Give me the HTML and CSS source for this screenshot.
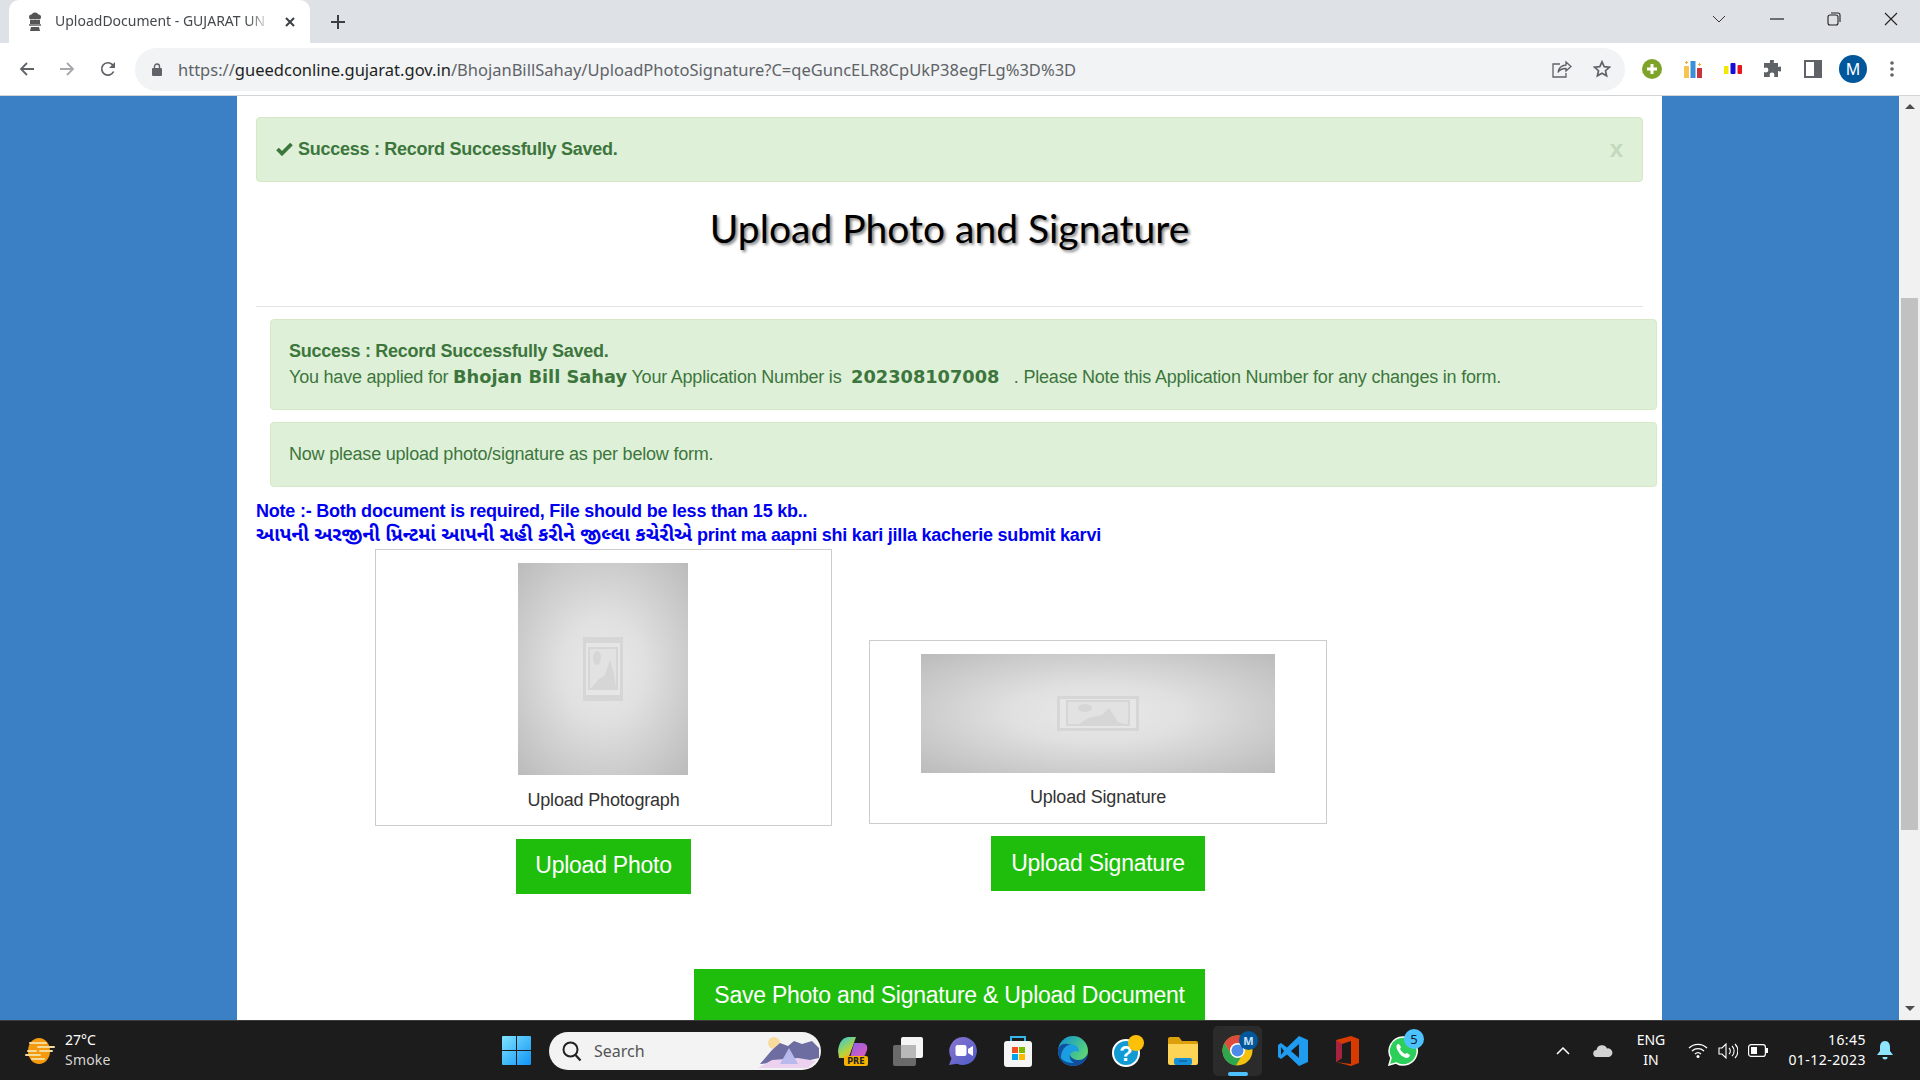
FILE: index.html
```html
<!DOCTYPE html>
<html lang="en">
<head>
<meta charset="utf-8">
<title>UploadDocument - GUJARAT UNIVERSITY</title>
<link rel="stylesheet" href="styles.css">
</head>
<body>
<div class="screen">
  <header class="chrome">
    <div class="tabbar">
      <div class="tab">
        <svg class="favicon" width="16" height="20" viewBox="0 0 16 20"><g fill="#555"><circle cx="8" cy="4" r="3.5"/><circle cx="4.5" cy="5" r="2.5"/><circle cx="11.5" cy="5" r="2.5"/><rect x="3" y="8" width="10" height="4"/><rect x="2" y="12" width="12" height="2" fill="#888"/><path d="M4 15h8l1 4H3z"/></g></svg>
        <span class="tab-title">UploadDocument - GUJARAT UN</span>
        <svg class="tab-close" width="12" height="12" viewBox="0 0 12 12"><path d="M2 2l8 8M10 2l-8 8" stroke="#3c4043" stroke-width="2"/></svg>
      </div>
      <svg class="new-tab" width="16" height="16" viewBox="0 0 16 16"><path d="M8 1v14M1 8h14" stroke="#3c4043" stroke-width="2"/></svg>
      <div class="win-controls">
        <svg class="wc-chev" width="14" height="8" viewBox="0 0 14 8"><path d="M1 1l6 6 6-6" fill="none" stroke="#333" stroke-width="1"/></svg>
        <svg class="wc-min" width="14" height="2" viewBox="0 0 14 2"><path d="M0 1h14" stroke="#222" stroke-width="1.2"/></svg>
        <svg class="wc-max" width="14" height="14" viewBox="0 0 14 14"><rect x="1" y="3" width="10" height="10" rx="2" fill="none" stroke="#222" stroke-width="1.1"/><path d="M4 1h7a2 2 0 0 1 2 2v7" fill="none" stroke="#222" stroke-width="1.1"/></svg>
        <svg class="wc-close" width="14" height="14" viewBox="0 0 14 14"><path d="M1 1l12 12M13 1L1 13" stroke="#222" stroke-width="1.1"/></svg>
      </div>
    </div>
    <div class="toolbar">
      <svg class="tb-back" width="16" height="16" viewBox="0 0 16 16"><path d="M15 8H2M8 2L2 8l6 6" fill="none" stroke="#5f6368" stroke-width="1.8"/></svg>
      <svg class="tb-fwd" width="16" height="16" viewBox="0 0 16 16"><path d="M1 8h13M8 2l6 6-6 6" fill="none" stroke="#a6a8ab" stroke-width="1.8"/></svg>
      <svg class="tb-reload" width="16" height="16" viewBox="0 0 16 16"><path d="M13.6 10.500A6.200 6.200 0 1 1 12.400 3.600L14.500 5.500" fill="none" stroke="#5f6368" stroke-width="1.7"/><path d="M15 1v6H9z" fill="#5f6368"/></svg>
      <div class="omnibox">
        <svg class="lock" width="10" height="13" viewBox="0 0 10 13"><path d="M2.500 5V3.500a2.500 2.500 0 0 1 5 0V5" fill="none" stroke="#5f6368" stroke-width="1.4"/><rect y="5" width="10" height="8" rx="1" fill="#5f6368"/></svg>
        <span class="url"><span class="url-dim">https://</span>gueedconline.gujarat.gov.in<span class="url-dim">/BhojanBillSahay/UploadPhotoSignature?C=qeGuncELR8CpUkP38egFLg%3D%3D</span></span>
        <svg class="om-share" width="20" height="18" viewBox="0 0 20 18"><path d="M14 2l5 4.500-5 4.500V8.500c-4 0-6.500 1-8 4 .5-4.500 3-7 8-7.500z" fill="none" stroke="#5f6368" stroke-width="1.3"/><path d="M8 4H1v13h13v-4" fill="none" stroke="#5f6368" stroke-width="1.3"/></svg>
        <svg class="om-star" width="18" height="18" viewBox="0 0 18 18"><path d="M9 1.800l2.200 4.800 5.200.6-3.900 3.500 1.100 5.100L9 13.200l-4.600 2.600 1.100-5.100L1.600 7.200l5.200-.6z" fill="none" stroke="#5f6368" stroke-width="1.7"/></svg>
      </div>
      <svg class="ext-plus" width="20" height="20" viewBox="0 0 20 20"><circle cx="10" cy="10" r="10" fill="#7da428"/><path d="M10 5v10M5 10h10" stroke="#fff" stroke-width="3"/></svg>
      <svg class="ext ext-first" width="20" height="18" viewBox="0 0 20 18"><rect x="1" y="6" width="5" height="12" fill="#f5c451"/><rect x="7.500" y="1" width="5" height="17" fill="#3a8fd6"/><rect x="14" y="8" width="5" height="10" fill="#c8343a"/><path d="M3.500 1v3M2 2.500h3M16.500 3v3M15 4.500h3" stroke="#e8b030" stroke-width="1"/></svg>
      <svg class="ext" width="20" height="14" viewBox="0 0 20 14"><rect x="1" y="4" width="4.500" height="8" fill="#f5e800"/><rect x="7.500" y="1" width="5" height="11" rx="1" fill="#1510d8"/><rect x="14.500" y="3" width="4.500" height="9" rx="1" fill="#e8161c"/></svg>
      <svg class="ext" width="18" height="18" viewBox="0 0 18 18"><path d="M7 1a2 2 0 0 1 4 0c0 .7-.3 1.200-.4 2H15v4c.8 0 1.300-.4 2-.4a2.400 2.400 0 0 1 0 4.800c-.7 0-1.200-.4-2-.4v6h-4c0-.8.4-1.300.4-2a2.400 2.400 0 0 0-4.800 0c0 .7.400 1.200.400 2H1v-5c.8 0 1.300.4 2 .4a2.400 2.400 0 0 0 0-4.800c-.7 0-1.200.4-2 .4V3h6c0-.8-.4-1.300 0-2z" fill="#5f6368"/></svg>
      <svg class="ext ext-side" width="18" height="18" viewBox="0 0 18 18"><rect x="1" y="1" width="16" height="16" fill="none" stroke="#5f6368" stroke-width="2"/><rect x="10" y="1" width="7" height="16" fill="#5f6368"/></svg>
      <div class="avatar">M</div>
      <svg class="dots" width="4" height="16" viewBox="0 0 4 16"><circle cx="2" cy="2" r="1.800" fill="#5f6368"/><circle cx="2" cy="8" r="1.800" fill="#5f6368"/><circle cx="2" cy="14" r="1.800" fill="#5f6368"/></svg>
    </div>
  </header>

  <div class="viewport">
    <main class="sheet-wrap">
      <div class="sheet">
        <div class="alert alert-top">
          <svg class="check" width="17" height="14" viewBox="0 0 17 14"><path d="M1.500 7l4.500 4.500L15.500 2" fill="none" stroke="#3c763d" stroke-width="3.800"/></svg>
          <strong>Success : Record Successfully Saved.</strong>
          <span class="alert-x">x</span>
        </div>
        <h1 class="title">Upload Photo and Signature</h1>
        <hr class="rule">
        <div class="alert alert-wide">
          <strong>Success : Record Successfully Saved.</strong><br>
          You have applied for <b class="verd">Bhojan Bill Sahay</b> Your Application Number is &nbsp;<b class="verd">202308107008</b> &nbsp; . Please Note this Application Number for any changes in form.
        </div>
        <div class="alert alert-wide alert-now">Now please upload photo/signature as per below form.</div>
        <p class="note">Note :- Both document is required, File should be less than 15 kb..<br><span class="note-gu">આપની અરજીની પ્રિન્ટમાં આપની સહી કરીને જીલ્લા કચેરીએ</span> print ma aapni shi kari jilla kacherie submit karvi</p>
        <div class="uploads">
          <section class="upload upload-photo">
            <div class="card">
              <div class="ph ph-photo">
                <svg width="40" height="64" viewBox="0 0 40 64"><rect width="40" height="64" fill="#d6d6d6"/><rect x="3" y="6" width="34" height="52" fill="#e6e6e6"/><rect x="6" y="11" width="28" height="41" fill="#e2e2e2" stroke="#d6d6d6" stroke-width="2"/><path d="M8 51l8-9 6-4 5-15 4 14 2 14z" fill="#d6d6d6"/><ellipse cx="14" cy="21" rx="4" ry="7" fill="#d6d6d6"/></svg>
              </div>
              <div class="caption">Upload Photograph</div>
            </div>
            <a class="btn">Upload Photo</a>
          </section>
          <section class="upload upload-sign">
            <div class="card">
              <div class="ph ph-sign">
                <svg width="82" height="35" viewBox="0 0 82 35"><rect width="82" height="35" fill="#d6d6d6"/><rect x="3" y="3" width="76" height="29" fill="#e6e6e6"/><rect x="10" y="5" width="62" height="24" fill="#e2e2e2" stroke="#d6d6d6" stroke-width="2"/><path d="M21 29l10-7 14-3 7-7 9 14 10 3z" fill="#d6d6d6"/><ellipse cx="28" cy="12" rx="7" ry="4" fill="#d6d6d6"/></svg>
              </div>
              <div class="caption">Upload Signature</div>
            </div>
            <a class="btn">Upload Signature</a>
          </section>
        </div>
        <div class="save-row"><a class="btn btn-save">Save Photo and Signature &amp; Upload Document</a></div>
      </div>
    </main>
    <aside class="scrollbar">
      <span class="sb-up"></span>
      <div class="sb-track"><div class="sb-thumb"></div></div>
      <span class="sb-down"></span>
    </aside>
  </div>

  <footer class="taskbar">
    <div class="weather">
      <svg width="32" height="26" viewBox="0 0 32 26"><ellipse cx="15" cy="13" rx="11" ry="13" fill="#f59a0e"/><path d="M6 5h16M14 9h16M4 13h8M16 13h12M2 17h14M8 21h12" stroke="#f3dc9a" stroke-width="2" stroke-linecap="round"/></svg>
      <div class="weather-text"><div>27°C</div><div class="weather-sub">Smoke</div></div>
    </div>
    <svg class="start" width="29" height="29" viewBox="0 0 29 29"><defs><linearGradient id="w" x1="0" y1="0" x2="1" y2="1"><stop offset="0" stop-color="#7fe4ff"/><stop offset="1" stop-color="#0f93f5"/></linearGradient></defs><path d="M0 1a1 1 0 0 1 1-1h13v14H0zM15 0h13a1 1 0 0 1 1 1v13H15zM0 15h14v14H1a1 1 0 0 1-1-1zM15 15h14v13a1 1 0 0 1-1 1H15z" fill="url(#w)"/></svg>
    <div class="search">
      <svg width="22" height="22" viewBox="0 0 22 22"><circle cx="9.500" cy="9.500" r="7" fill="none" stroke="#222" stroke-width="2"/><path d="M14.500 15l5 5.500" stroke="#222" stroke-width="2.200"/></svg>
      <span class="search-text">Search</span>
      <svg class="search-art" width="64" height="34" viewBox="0 0 64 34"><circle cx="18" cy="9" r="6" fill="#f8dc9e"/><path d="M4 30L16 16l8-7 8 3 6-5 8 3 10-3 7 7v10L54 26z" fill="#6e6da2"/><path d="M2 34l14-8 26-2 18 3-8 7z" fill="#ecd2ee"/><path d="M24 30l9-16 9 16z" fill="#b8b9ec"/></svg>
    </div>
    <div class="apps">
      <div class="app"><svg width="32" height="32" viewBox="0 0 32 32"><defs><linearGradient id="cp" x1="0" y1="0" x2=".6" y2="1"><stop offset="0" stop-color="#2bc6e6"/><stop offset=".7" stop-color="#b6d63a"/><stop offset="1" stop-color="#f0b030"/></linearGradient><linearGradient id="cq" x1="0" y1="0" x2="1" y2="1"><stop offset="0" stop-color="#8a60e8"/><stop offset="1" stop-color="#e85ab8"/></linearGradient></defs><path d="M1 16C2 7 6 2 12 2h7l-6 17c-1 3-3 4-6 4H2z" fill="url(#cp)"/><path d="M17 8h8c4 0 6 3 5 7l-2 5c-1 2-3 3-5 3h-10z" fill="url(#cq)"/><rect x="7" y="21" width="24" height="10" rx="2" fill="#f5b301"/><text x="19" y="29" class="pre">PRE</text></svg></div>
      <div class="app"><svg width="30" height="30" viewBox="0 0 30 30"><rect y="9" width="23" height="21" rx="2" fill="#6a6a6a"/><rect x="8" y="1" width="22" height="21" rx="2" fill="#f5f5f5"/><rect x="8" y="9" width="15" height="13" fill="#b8b8b8"/></svg></div>
      <div class="app"><svg width="30" height="30" viewBox="0 0 30 30"><defs><linearGradient id="mt" x1="0" y1="0" x2="1" y2="1"><stop offset="0" stop-color="#8a75cf"/><stop offset="1" stop-color="#4f5cc9"/></linearGradient></defs><path d="M15 1a14 14 0 1 1-6 26.700L1 29l2.500-6.500A14 14 0 0 1 15 1z" fill="url(#mt)"/><rect x="7.500" y="9" width="11" height="11" rx="2" fill="#fff"/><path d="M20 13l5-3v10l-5-3z" fill="#fff"/></svg></div>
      <div class="app"><svg width="30" height="32" viewBox="0 0 30 32"><path d="M8 7V2h14v5" fill="none" stroke="#35b5e8" stroke-width="2"/><rect x="1" y="6" width="28" height="26" rx="3" fill="#f5f5f5"/><rect x="9" y="12" width="6" height="6" fill="#f25022"/><rect x="16" y="12" width="6" height="6" fill="#7fba00"/><rect x="9" y="19" width="6" height="6" fill="#00a4ef"/><rect x="16" y="19" width="6" height="6" fill="#ffb900"/></svg></div>
      <div class="app"><svg width="30" height="30" viewBox="0 0 30 30"><defs><linearGradient id="ed" x1="0" y1="0" x2="1" y2=".7"><stop offset="0" stop-color="#0c8fd8"/><stop offset="1" stop-color="#63dc6c"/></linearGradient></defs><circle cx="15" cy="15" r="15" fill="url(#ed)"/><path d="M30 17c-1 9-8 13-14 13C7 30 0 24 0 15c0-4 4-8 9-7 5 0 8 3 8 7-2-1-5 0-5 3 0 4 5 6 9 6 4 0 7-3 9-7z" fill="#114f9e"/><path d="M3 22c0-9 6-15 13-13 4 1 5 4 5 7-3-2-8-1-9 3-1 3 1 6 4 8-6 0-11-2-13-5z" fill="#1b9de2"/></svg></div>
      <div class="app app-help"><svg width="32" height="32" viewBox="0 0 32 32"><circle cx="14" cy="18" r="13" fill="#119ad4" stroke="#fff" stroke-width="2"/><text x="14" y="26" class="q">?</text><circle cx="24" cy="8" r="8" fill="#fdc009"/></svg></div>
      <div class="app"><svg width="30" height="28" viewBox="0 0 30 28"><path d="M0 2a2 2 0 0 1 2-2h9l3 4h14a2 2 0 0 1 2 2v3H0z" fill="#dd9f0a"/><path d="M0 7h30v19a2 2 0 0 1-2 2H2a2 2 0 0 1-2-2z" fill="#fdd456"/><rect x="6" y="21" width="18" height="7" fill="#1690d8" rx="2"/><path d="M11 24h8" stroke="#0c4e8a" stroke-width="1"/></svg></div>
      <div class="app app-active">
        <svg width="31" height="31" viewBox="0 0 31 31"><circle cx="15.500" cy="15.500" r="15" fill="#f4c20d"/><path d="M15.500.5A15 15 0 0 0 2.500 8l6.500 11a7 7 0 0 1 6.500-10.500H29A15 15 0 0 0 15.500.5z" fill="#de4b3c"/><path d="M2.500 8A15 15 0 0 0 14 30.500l6.500-11a7 7 0 0 1-11.500-.5z" fill="#2fa650"/><circle cx="15.500" cy="15.500" r="7.500" fill="#fff"/><circle cx="15.500" cy="15.500" r="6" fill="#4c8ce8"/></svg>
        <span class="app-badge app-badge-m">M</span>
        <span class="app-dash"></span>
      </div>
      <div class="app"><svg width="30" height="30" viewBox="0 0 30 30"><path d="M21 0l9 4v22l-9 4-12-11.500L3 23l-3-2V9l3-2 6 4.500z" fill="#1f9cf0"/><path d="M21 8l-8 7 8 7z" fill="#1c1c1c"/><path d="M3 11l3 4-3 4z" fill="#1c1c1c"/></svg></div>
      <div class="app"><svg width="24" height="30" viewBox="0 0 24 30"><path d="M0 4l15-4 8 3v24l-8 3-15-4 15 2V5L6 8v14l-6 4z" fill="#d83b01"/><path d="M0 4l6 4v14l-6 4z" fill="#a5233e"/></svg></div>
      <div class="app"><svg width="30" height="30" viewBox="0 0 30 30"><path d="M15 1a14 14 0 1 1-7 26L1 29l2-7A14 14 0 0 1 15 1z" fill="#2ccf5a" stroke="#fff" stroke-width="1.500"/><path d="M10 8c-2 1-2 4 0 7 2 4 5 6 8 7 2 0 4-1 4-3l-3-2-2 1c-2-1-4-3-5-5l1-2-2-3z" fill="#fff"/></svg><span class="app-badge app-badge-n">5</span></div>
    </div>
    <div class="tray">
      <svg class="t-chev" width="14" height="8" viewBox="0 0 14 8"><path d="M1 7l6-6 6 6" fill="none" stroke="#fff" stroke-width="1.500"/></svg>
      <svg class="t-cloud" width="20" height="13" viewBox="0 0 20 13"><path d="M4 13a3.500 3.500 0 0 1-.5-7A5.500 5.500 0 0 1 14 4.500 4.300 4.300 0 0 1 16 13z" fill="#d2d2d2"/></svg>
      <div class="t-lang"><div>ENG</div><div>IN</div></div>
      <svg class="t-wifi" width="20" height="15" viewBox="0 0 20 15"><path d="M1 5a13 13 0 0 1 18 0M4 8a9 9 0 0 1 12 0M7 11a4.500 4.500 0 0 1 6 0" fill="none" stroke="#fff" stroke-width="1.300"/><circle cx="10" cy="13.500" r="1.500" fill="#fff"/></svg>
      <svg class="t-vol" width="20" height="16" viewBox="0 0 20 16"><path d="M1 5h3l4-4v14l-4-4H1z" fill="none" stroke="#fff" stroke-width="1.100"/><path d="M11 5a4 4 0 0 1 0 6M14 3a7 7 0 0 1 0 10M17 1a10 10 0 0 1 0 14" fill="none" stroke="#fff" stroke-width="1.100"/></svg>
      <svg class="t-batt" width="20" height="13" viewBox="0 0 20 13"><rect x=".6" y=".6" width="16.800" height="11.800" rx="2.500" fill="none" stroke="#fff" stroke-width="1.200"/><rect x="3" y="3" width="6" height="7" fill="#fff"/><rect x="18" y="4" width="2" height="5" fill="#fff"/></svg>
      <div class="t-clock"><div>16:45</div><div>01-12-2023</div></div>
      <svg class="t-bell" width="16" height="19" viewBox="0 0 16 19"><path d="M8 0c3.500 0 5 3 5 6v4l3 4H0l3-4V6c0-3 1.500-6 5-6z" fill="#8fe4ff"/><path d="M5.500 16h5a2.500 2.500 0 0 1-5 0z" fill="#8fe4ff"/></svg>
    </div>
  </footer>
</div>
</body>
</html>
```

FILE: styles.css
```css
* { box-sizing: border-box; }
html, body { margin: 0; height: 100%; overflow: hidden; }
body { font-family: "Liberation Sans", Arial, sans-serif; }
.screen { width: 1920px; height: 1080px; display: flex; flex-direction: column; overflow: hidden; background: #fff; }

/* browser chrome */
.chrome { flex: 0 0 96px; display: flex; flex-direction: column; border-bottom: 1px solid #d3d4d6; font-family: "Noto Sans", "Open Sans", sans-serif; }
.tabbar { flex: 0 0 43px; background: #dee1e6; display: flex; align-items: center; padding-left: 9px; }
.tab { width: 301px; height: 43px; background: #fff; border-radius: 10px 10px 0 0; display: flex; align-items: center; padding-left: 18px; }
.favicon { flex: none; }
.tab-title { margin-left: 12px; width: 215px; padding-bottom: 2px; white-space: nowrap; font-size: 14px; color: #45484c; -webkit-mask-image: linear-gradient(to right, #000 90%, transparent 100%); mask-image: linear-gradient(to right, #000 90%, transparent 100%); }
.tab-close { margin-left: 14px; }
.new-tab { margin-left: 20px; }
.win-controls { margin-left: auto; display: flex; align-items: center; height: 100%; padding-right: 22px; padding-bottom: 6px; }
.wc-min { margin-left: 44px; }
.wc-max { margin-left: 43px; }
.wc-close { margin-left: 43px; }
.toolbar { flex: 0 0 52px; background: #fff; display: flex; align-items: center; padding-left: 19px; }
.tb-fwd { margin-left: 24px; }
.tb-reload { margin-left: 25px; }
.omnibox { width: 1490px; height: 43px; margin-left: 19px; background: #f1f3f4; border-radius: 22px; display: flex; align-items: center; padding-left: 17px; }
.lock { flex: none; }
.url { margin-left: 16px; font-size: 16.5px; color: #1d1f22; white-space: nowrap; width: 1365px; overflow: hidden; }
.url-dim { color: #5f6368; }
.om-share { margin-left: auto; }
.om-star { margin-left: 21px; margin-right: 14px; }
.ext-plus { margin-left: 17px; }
.ext { margin-left: 20px; }
.ext-first { margin-left: 21px; }
.ext-side { margin-left: 23px; }
.avatar { width: 28px; height: 28px; margin-left: 17px; border-radius: 50%; background: #01579b; color: #fff; font: 16px/28px "Noto Sans", sans-serif; text-align: center; }
.dots { margin-left: 23px; }

/* page */
.viewport { flex: 0 0 924px; display: flex; background: #3b7fc4; overflow: hidden; }
.sheet-wrap { flex: 1; display: flex; justify-content: center; overflow: hidden; }
.sheet { width: 1425px; height: 1100px; flex: none; background: #fff; padding: 21px 0 0 19px; }
.alert { background: #dff0d8; border: 1px solid #d6e9c6; border-radius: 4px; color: #3c763d; font-size: 18px; letter-spacing: -0.21px; }
.alert strong { letter-spacing: -0.27px; }
.alert-top { width: 1387px; height: 65px; display: flex; align-items: center; padding: 0 19px; position: relative; }
.check { margin-right: 5px; margin-top: -2px; }
.alert-x { position: absolute; right: 19px; top: 18px; font-size: 24px; font-weight: bold; line-height: 26px; color: #c2d9bb; }
.title { margin: 0; height: 124px; padding-top: 22px; text-align: center; width: 1387px; font: 400 39px/48px Lato, "Open Sans", sans-serif; color: #000; text-shadow: 2px 2px 3px #808080; }
.rule { margin: 0; width: 1387px; height: 1px; border: 0; background: #e3e3e3; }
.alert-wide { width: 1387px; margin-left: 14px; margin-top: 12px; height: 91px; padding: 18px 18px 0; line-height: 26px; }
.alert-now { height: 65px; padding-top: 18px; }
.verd { font-family: "DejaVu Sans", Verdana, sans-serif; font-size: 17.8px; letter-spacing: 0; }
.note { margin: 12px 0 0; font-size: 18px; font-weight: bold; color: #0000f0; line-height: 24px; letter-spacing: -0.22px; font-family: "Liberation Sans", "Noto Sans Gujarati", "Noto Sans", sans-serif; height: 50px; }
.note-gu { font-size: 19.3px; letter-spacing: 0; }
.uploads { display: flex; align-items: flex-end; padding-left: 119px; gap: 37px; }
.upload { display: flex; flex-direction: column; align-items: center; }
.upload-photo { width: 457px; }
.upload-sign { width: 458px; margin-bottom: 3px; }
.card { width: 100%; border: 1px solid #ccc; padding: 13px 0 0; display: flex; flex-direction: column; align-items: center; }
.ph { background: radial-gradient(ellipse at center, #e9e9e9 0%, #e0e0e0 35%, #cccccc 70%, #bbbbbb 100%); display: flex; align-items: center; justify-content: center; }
.ph-photo { width: 170px; height: 212px; margin-right: 1px; }
.ph-sign { width: 354px; height: 119px; }
.caption { font-size: 18px; color: #333; line-height: 24px; padding: 13px 0; letter-spacing: -0.18px; }
.upload-sign .caption { padding: 12px 0 14px; }
.btn { display: block; padding: 0 20px; height: 55px; line-height: 53px; margin-top: 12px; background: #1fbd0c; color: #fff; font-size: 23px; letter-spacing: -0.25px; white-space: nowrap; text-align: center; }
.upload-photo .btn { margin-top: 13px; padding: 0 19.5px; }
.upload-sign .btn { line-height: 54px; }
.save-row { display: flex; justify-content: center; width: 1387px; margin-top: 63px; }
.btn-save { margin-top: 12px; width: 511px; padding: 0; }

/* scrollbar */
.scrollbar { flex: 0 0 21px; background: #f1f1f1; position: relative; display: flex; flex-direction: column; padding: 202px 2px 0; }
.sb-thumb { height: 532px; background: #c1c1c1; }
.sb-up { position: absolute; top: 8px; left: 6px; border: 5px solid transparent; border-top: 0; border-bottom: 5px solid #4d4d4d; width: 0; }
.sb-down { position: absolute; bottom: 9px; left: 6px; border: 5px solid transparent; border-bottom: 0; border-top: 5px solid #4d4d4d; width: 0; }

/* taskbar */
.taskbar { flex: 0 0 60px; background: #1c1c1c; border-top: 1px solid #3c3c3c; display: flex; align-items: center; color: #fff; font-family: "Noto Sans", "Open Sans", sans-serif; font-size: 14px; }
.weather { width: 502px; display: flex; align-items: center; padding-left: 24px; }
.weather-text { margin-left: 9px; line-height: 20px; padding-bottom: 2px; }
.weather-sub { color: #d6d6d6; letter-spacing: 0.2px; }
.start { flex: none; }
.search { width: 272px; height: 38px; margin-left: 18px; background: #f3f3f3; border-radius: 19px; display: flex; align-items: center; padding-left: 12px; color: #444; overflow: hidden; }
.search-text { margin-left: 11px; font-size: 16px; color: #555; }
.search-art { margin-left: auto; margin-right: 1px; }
.apps { display: flex; margin-left: 4px; }
.app { width: 55px; height: 50px; display: flex; align-items: center; justify-content: center; position: relative; }
.app-active { background: #2b2b2b; border-radius: 5px; width: 49px; margin: 0 3px; }
.app-dash { position: absolute; left: 15px; bottom: 0; width: 20px; height: 4px; border-radius: 2px; background: #4cc2ff; }
.app-badge { position: absolute; border-radius: 50%; text-align: center; }
.app-badge-m { top: 5px; right: 4px; width: 19px; height: 19px; background: #01579b; font-size: 11px; line-height: 19px; color: #cfe2f2; font-weight: 700; }
.app-badge-n { top: 3px; right: 6px; width: 20px; height: 20px; background: #4cc2ff; color: #102030; font-size: 13px; line-height: 20px; }
.pre { font: 700 8px "DejaVu Sans", sans-serif; fill: #222; text-anchor: middle; }
.q { font: 700 22px "Liberation Sans", sans-serif; fill: #fff; text-anchor: middle; }
.tray { margin-left: auto; display: flex; align-items: center; padding-right: 27px; }
.t-cloud { margin-left: 23px; }
.t-lang { margin-left: 22px; width: 32px; text-align: center; line-height: 20px; padding-bottom: 2px; }
.t-wifi { margin-left: 21px; }
.t-vol { margin-left: 10px; }
.t-batt { margin-left: 10px; }
.t-clock { margin-left: 20px; width: 78px; text-align: right; line-height: 20px; letter-spacing: 0.45px; padding-bottom: 2px; }
.t-bell { margin-left: 11px; }
```
